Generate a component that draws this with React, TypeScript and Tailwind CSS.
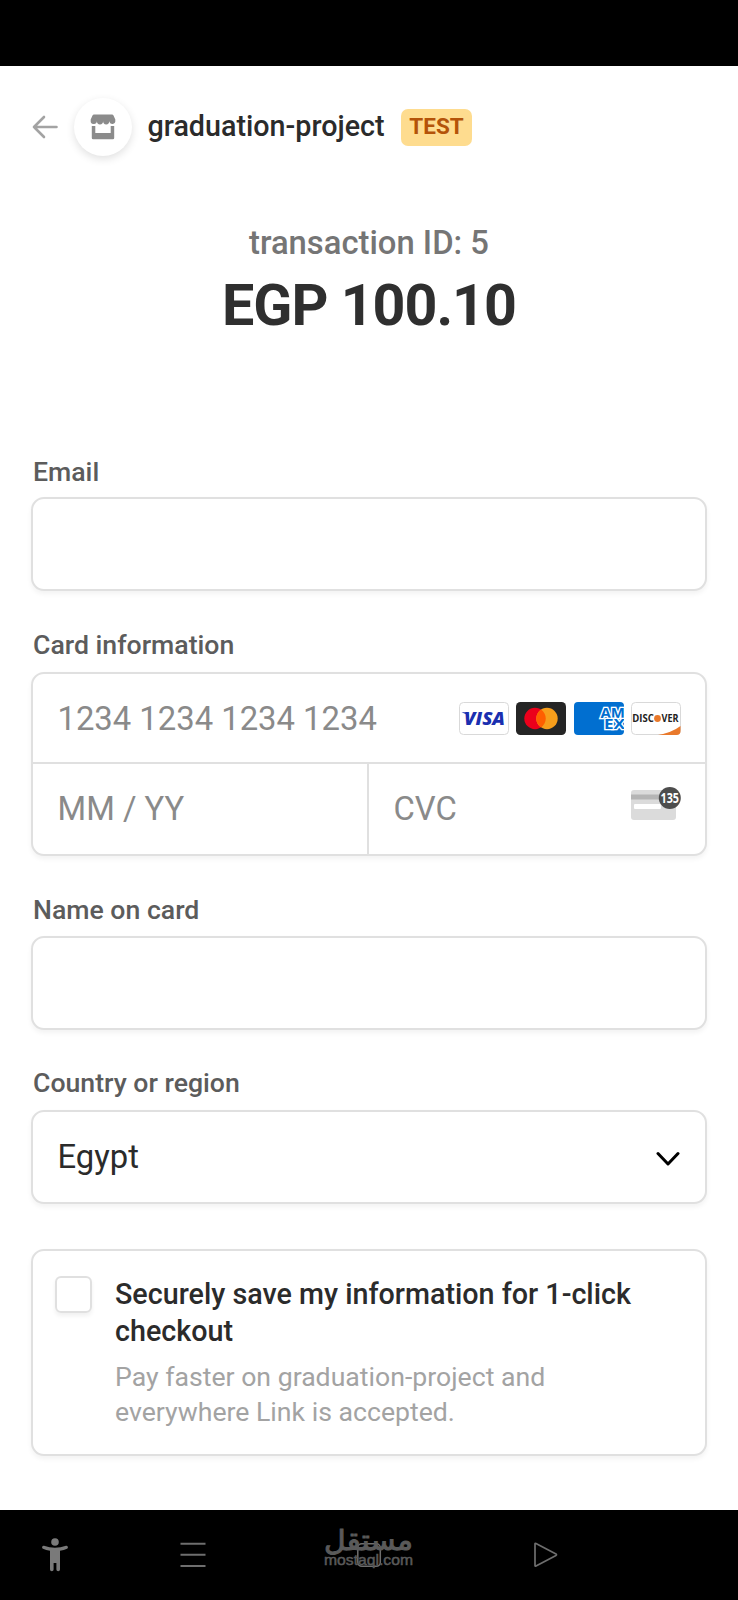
import type { ReactNode } from "react";

function VisaIcon() {
  return (
    <svg viewBox="0 0 50 33" className="w-[50px] h-[33px]">
      <rect x="0.5" y="0.5" width="49" height="32" rx="4" fill="#fff" stroke="#d9d9d9" />
      <text x="5" y="23.2" fontFamily="'Open Sans', sans-serif" fontWeight="800" fontStyle="italic" fontSize="18" fill="#1a2fb0" textLength="41" lengthAdjust="spacingAndGlyphs">VISA</text>
      <path d="M2.500 10.300 H8.500 L10 15 Q7 11.500 2.500 10.300" fill="#1a2fb0" />
    </svg>
  );
}

function MastercardIcon() {
  return (
    <svg viewBox="0 0 50 33" className="w-[50px] h-[33px]">
      <rect width="50" height="33" rx="4.500" fill="#252525" />
      <circle cx="19" cy="16.500" r="10.700" fill="#eb001b" />
      <circle cx="31" cy="16.500" r="10.700" fill="#f79e1b" />
      <path d="M25 7.600 a10.700 10.700 0 0 1 0 17.800 a10.700 10.700 0 0 1 0 -17.800" fill="#ff5f00" />
    </svg>
  );
}

function AmexIcon() {
  return (
    <svg viewBox="0 0 50 33" className="w-[50px] h-[33px] rounded-[4px]">
      <rect width="50" height="33" fill="#016fd0" />
      <g fontFamily="'Open Sans', sans-serif" fontWeight="700" fontSize="13.500" fill="#016fd0" stroke="#fff" strokeWidth="2.400" paintOrder="stroke">
        <text x="26.500" y="15.800" textLength="24.500" lengthAdjust="spacingAndGlyphs">AM</text>
        <text x="30" y="27" textLength="21" lengthAdjust="spacingAndGlyphs">EX</text>
      </g>
    </svg>
  );
}

function DiscoverIcon() {
  return (
    <svg viewBox="0 0 50 33" className="w-[50px] h-[33px]">
      <rect x="0.5" y="0.5" width="49" height="32" rx="4" fill="#fff" stroke="#d9d9d9" />
      <path d="M27 33 Q41 30.500 49.500 24 V29 a4 4 0 0 1 -4 4 Z" fill="#e9792b" />
      <g fontFamily="'Open Sans', sans-serif" fontWeight="700" fontSize="9.800" fill="#222">
        <text x="1.300" y="20" textLength="21.500" lengthAdjust="spacingAndGlyphs">DISC</text>
        <text x="30.500" y="20" textLength="17" lengthAdjust="spacingAndGlyphs">VER</text>
      </g>
      <circle cx="26.500" cy="16.500" r="3.400" fill="#e9792b" />
    </svg>
  );
}

function CvcIcon() {
  return (
    <svg viewBox="0 0 50 34" className="w-[50px] h-[34px] overflow-visible">
      <rect x="0" y="4" width="45" height="30" rx="3" fill="#dbdbdb" />
      <rect x="0" y="8.500" width="45" height="5" fill="#b5b5b5" />
      <rect x="3" y="18" width="27" height="5" rx="1" fill="#fff" />
      <circle cx="38.800" cy="12" r="11" fill="#4d4d4d" />
      <text x="38.800" y="16.800" textAnchor="middle" fontFamily="'Open Sans', sans-serif" fontWeight="700" fontSize="13.500" fill="#fff" textLength="18.500" lengthAdjust="spacingAndGlyphs">135</text>
    </svg>
  );
}

function Label({ children, className = "pb-[8px]" }: { children: ReactNode; className?: string }) {
  return (
    <div className={`h-[45px] flex items-end pl-0.5 text-[26.65px] leading-[36px] font-medium text-[#5c5c5c] ${className}`}>
      {children}
    </div>
  );
}

const boxStyle = "border-2 border-[#e0e0e0] rounded-[13px] bg-white shadow-[0_3px_5px_rgba(0,0,0,0.05)]";

export default function App() {
  return (
    <div className="w-[738px] h-[1600px] bg-white flex flex-col overflow-hidden font-[Roboto,sans-serif] whitespace-nowrap">
      {/* Status bar */}
      <div className="h-[66px] bg-black shrink-0" />

      <main className="h-[1444px] shrink-0 px-[31px] pt-8">
        {/* Merchant header */}
        <header className="flex items-center h-[58px]">
          <svg viewBox="0 0 26 24" className="w-[26px] h-6 ml-[1px]" fill="none" stroke="#a3a3a3" strokeWidth="2.600" strokeLinecap="round" strokeLinejoin="round">
            <path d="M12 2 L2 12 L12 22 M2 12 H24.500" />
          </svg>
          <div className="w-[58px] h-[58px] ml-[15.5px] rounded-full bg-white flex items-center justify-center shadow-[0_3px_8px_rgba(0,0,0,0.12)]">
            <svg viewBox="0 0 26 26" className="w-[26px] h-[26px]" fill="#8b8b8b">
              <path d="M4 0.500 H22 Q23 0.500 23.500 1.500 L25.300 5.500 V6.500 a3 3 0 0 1 -6 0.800 a3.100 3.100 0 0 1 -6.200 0 a3.100 3.100 0 0 1 -6.200 0 a3 3 0 0 1 -6.200 -0.800 V5.500 L2.500 1.500 Q3 0.500 4 0.500 Z" />
              <path d="M1.800 12 H5.300 V19 H20.700 V12 H24.200 V24 a1.300 1.300 0 0 1 -1.300 1.300 H3.100 A1.300 1.300 0 0 1 1.800 24 Z" />
            </svg>
          </div>
          <div className="ml-4 w-[237.5px] text-[28.7px] font-medium text-[#2b2b2b]">graduation-project</div>
          <div className="ml-4 mt-[1px] pb-[2px] w-[71px] h-[37px] rounded-[7px] bg-[#fedc8f] text-[#b45309] text-[22.5px] font-bold flex items-center justify-center">
            TEST
          </div>
        </header>

        {/* Amount */}
        <section className="text-center pt-[67px]">
          <div className="h-10 leading-10 text-[32.8px] font-medium text-[#757575]">transaction ID: 5</div>
          <div className="h-[72px] mt-[7px] leading-[72px] text-[57.4px] tracking-[-1px] font-bold text-[#2f2f2f]">EGP 100.10</div>
        </section>

        <section className="pt-[110px]">
          <Label className="pb-[7px]">Email</Label>
          <div className={`h-[94px] ${boxStyle}`} />

          <div className="mt-9">
            <Label className="pb-[9px]">Card information</Label>
            <div className={`h-[184px] text-[32.8px] text-[#8a8a8a] ${boxStyle}`}>
              <div className="h-[90px] border-b-2 border-[#e0e0e0] flex items-center justify-between px-6">
                <span className="pt-[3px] pl-[0.5px]">1234 1234 1234 1234</span>
                <div className="flex gap-[7.5px]">
                  <VisaIcon />
                  <MastercardIcon />
                  <AmexIcon />
                  <DiscoverIcon />
                </div>
              </div>
              <div className="h-[90px] flex">
                <div className="w-[336px] border-r-2 border-[#e0e0e0] flex items-center pt-[2px] pl-[24.5px]">MM / YY</div>
                <div className="flex-1 flex items-center justify-between px-6">
                  <span className="pt-[2px] pl-[0.5px]">CVC</span>
                  <div className="pb-[13px]">
                    <CvcIcon />
                  </div>
                </div>
              </div>
            </div>
          </div>

          <div className="mt-[35px]">
            <Label>Name on card</Label>
            <div className={`h-[94px] ${boxStyle}`} />
          </div>

          <div className="mt-[35px]">
            <Label className="pb-[9px]">Country or region</Label>
            <div className={`h-[94px] flex items-center justify-between pl-[24.5px] pr-[25px] text-[32.8px] text-[#2b2b2b] ${boxStyle}`}>
              <span className="pt-[2px]">Egypt</span>
              <svg viewBox="0 0 24 16" className="w-6 h-4 mt-[3px]" fill="none" stroke="#000" strokeWidth="3" strokeLinecap="round" strokeLinejoin="round">
                <path d="M2 2.500 L12 13 L22 2.500" />
              </svg>
            </div>
          </div>

          {/* Save my information */}
          <div className={`h-[207px] mt-[45px] flex pl-[22px] pt-[25px] ${boxStyle}`}>
            <div className="w-[37px] h-[37px] border-2 border-[#e0e0e0] rounded-[6px] shadow-[0_3px_4px_rgba(0,0,0,0.06)]" />
            <div className="ml-[23px]">
              <div className="text-[28.7px] leading-[37px] font-medium text-[#2b2b2b]">
                Securely save my information for 1-click
                <br />
                checkout
              </div>
              <div className="mt-[10px] text-[26.65px] leading-[35px] text-[#a3a3a3]">
                Pay faster on graduation-project and
                <br />
                everywhere Link is accepted.
              </div>
            </div>
          </div>
        </section>
      </main>

      {/* Android navigation bar */}
      <nav className="relative h-[90px] shrink-0 bg-black flex items-start text-[#6e6e6e]">
        <svg viewBox="0 0 26 34" className="w-[26px] h-[34px] ml-[42px] mt-[28px]" fill="#7a7a7a">
          <circle cx="13" cy="4" r="3.800" />
          <path d="M2 7.800 Q13 11.500 24 7.800 a1.600 1.600 0 0 1 1 3 Q22 12.200 18 12.700 V31.500 a1.700 1.700 0 0 1 -3.600 0 V25 H11.600 V31.500 a1.700 1.700 0 0 1 -3.600 0 V12.700 Q4 12.200 1 10.800 a1.600 1.600 0 0 1 1 -3 Z" />
        </svg>
        <svg viewBox="0 0 26 26" className="w-[26px] h-[26px] ml-[112px] mt-[32px]" stroke="currentColor" strokeWidth="2">
          <path d="M0.500 1.700 H25.500 M0.500 12.700 H25.500 M0.500 24 H25.500" />
        </svg>
        <svg viewBox="0 0 26 26" className="w-[26px] h-[26px] ml-[150px] mt-[32px]" fill="none" stroke="currentColor" strokeWidth="1.500">
          <rect x="1.800" y="1.800" width="22.500" height="22.500" rx="4" />
        </svg>
        <svg viewBox="0 0 26 26" className="w-[26px] h-[26px] ml-[151px] mt-[32px]" fill="none" stroke="currentColor" strokeWidth="1.700" strokeLinejoin="round">
          <path d="M2 1.800 Q2 1 3 1.500 L23 12 Q24 12.700 23 13.400 L3 24 Q2 24.500 2 23.500 Z" />
        </svg>

        {/* Watermark laid over the home button */}
        <svg viewBox="0 0 92 46" className="absolute left-[323px] top-[14px] w-[92px] h-[46px] overflow-visible" fill="#5a5a5a">
          <text x="90" y="26" direction="rtl" fontFamily="'DejaVu Sans', sans-serif" fontSize="28" stroke="#5a5a5a" strokeWidth="1" textLength="89" lengthAdjust="spacingAndGlyphs">مستقل</text>
          <text x="1" y="40.500" fontFamily="'Liberation Sans', sans-serif" fontSize="15" stroke="#5a5a5a" strokeWidth="0.500" textLength="89" lengthAdjust="spacingAndGlyphs">mostaql.com</text>
        </svg>
      </nav>
    </div>
  );
}
